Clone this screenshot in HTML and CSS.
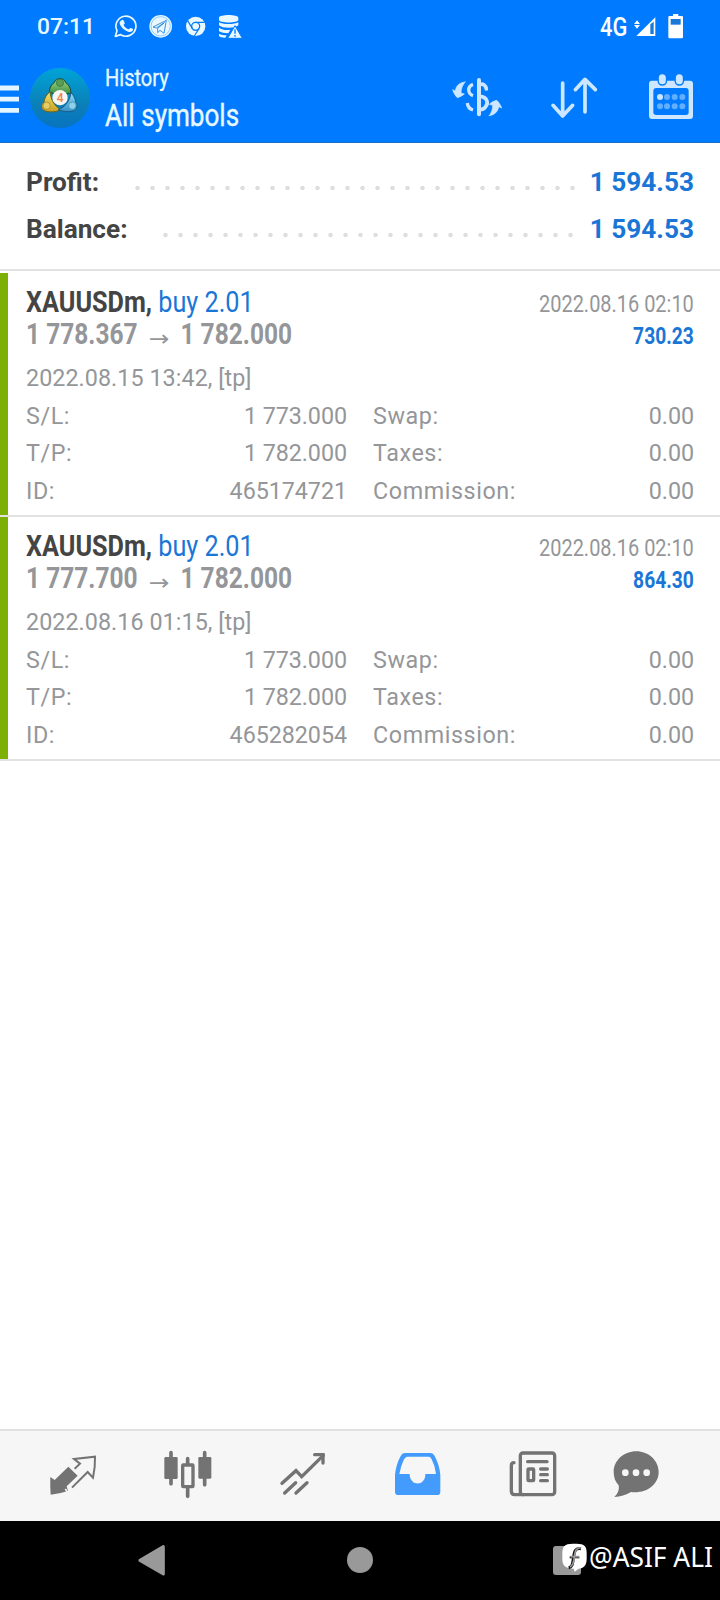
FILE: index.html
```html
<!DOCTYPE html>
<html lang="en">
<head>
<meta charset="utf-8">
<title>History</title>
<link rel="stylesheet" href="styles.css">
</head>
<body>
<div class="screen">
  <header class="top">
    <div class="status">
      <span class="clock">07:11</span>
      <svg class="notifications" width="135" height="34" viewBox="330 30 405 102">
        <path d="M346 109l5-17a30 30 0 1 1 11 12z" fill="none" stroke="#e9f8ff" stroke-width="5" stroke-linejoin="round"/>
        <path d="M363 62c5-5 8-2 11 7 1 3-4 5-3 7 3 6 8 10 14 12 3 1 4-6 8-4 8 4 8 4 4 9-6 6-13 3-21-2-9-6-18-17-17-23 0-3 1-4 4-6z" fill="#e9f8ff"/>
        <circle cx="482" cy="79" r="34" fill="#e9f8ff"/>
        <circle cx="482" cy="79" r="29" fill="none" stroke="#329bff" stroke-width="1.5"/>
        <path d="M459 81l40-20-7 39-12-9-7 7v-13l20-17-24 16z" fill="#e9f8ff" stroke="#167edd" stroke-width="2.5" stroke-linejoin="round"/>
        <circle cx="587" cy="79" r="29" fill="#e9f8ff"/>
        <circle cx="587" cy="79" r="12" fill="#e9f8ff" stroke="#087bee" stroke-width="4"/>
        <path d="M587 67h27M577 86l-14-24M597 86l-14 22" stroke="#087bee" stroke-width="3.5"/>
        <path d="M657 53c0-11 58-11 58 0v6c0 11-58 11-58 0zM657 67c10 7 48 7 58 0v9c-10 10-48 10-58 0zM657 83c8 7 25 8 34 6l-6 11c-12 0-22-2-28-6zM657 101c6 4 15 5 23 5l-4 7c-10 0-19-3-19-6z" fill="#e9f8ff"/>
        <path d="M705 77l22 38h-44z" fill="#e9f8ff" stroke="#007bff" stroke-width="3"/>
        <path d="M705 88v13M705 105v5" stroke="#007bff" stroke-width="4"/>
      </svg>
      <span class="network">4G</span>
      <svg class="signal" width="54" height="30" viewBox="606 33 162 90">
        <path d="M621 61l9 11h-18zM621 86l9-11h-18z" fill="#fff"/>
        <path d="M619 108l57-56v56z" fill="#fff"/>
        <path d="M661 73l10-8v37h-10z" fill="#1879d8"/>
        <path d="M729 42h16v6h11q3 0 3 4v59q0 4-4 4h-36q-4 0-4-4V52q0-4 4-4h10z" fill="#fff"/>
        <path d="M722 57h30v17h-30z" fill="#1879d8"/>
      </svg>
    </div>
    <div class="appbar">
      <svg class="menu" width="19" height="28" viewBox="0 0 19 28"><path d="M0 3h19M0 14.2h19M0 25.3h19" stroke="#e3f6ff" stroke-width="4.8"/></svg>
      <svg class="logo" width="60" height="60" viewBox="90 204 180 180">
        <defs>
          <linearGradient id="disc" x1="0" y1="0" x2="0" y2="1"><stop offset="0" stop-color="#00a4d8"/><stop offset=".6" stop-color="#0b80b8"/><stop offset="1" stop-color="#0873c0"/></linearGradient>
          <linearGradient id="green" x1="0" y1="0" x2="0" y2="1"><stop offset="0" stop-color="#a9d688"/><stop offset="1" stop-color="#3c9040"/></linearGradient>
          <linearGradient id="gold" x1="0" y1="0" x2="0" y2="1"><stop offset="0" stop-color="#f4e464"/><stop offset="1" stop-color="#c89f24"/></linearGradient>
          <linearGradient id="blue" x1="0" y1="0" x2="0" y2="1"><stop offset="0" stop-color="#95def8"/><stop offset="1" stop-color="#3490c8"/></linearGradient>
        </defs>
        <circle cx="180" cy="294" r="90" fill="url(#disc)"/>
        <path d="M148 275c1-14 7-23 15-27 2-16 31-16 34 0 9 5 15 15 16 30-11 6-52 7-65-3z" fill="url(#green)" stroke="#164d35" stroke-width="3"/>
        <path d="M150 275c-10 8-17 19-18 32-11 7-9 22 4 26 14 5 33 3 47-4-19-10-31-30-33-54z" fill="url(#gold)" stroke="#66621f" stroke-width="3"/>
        <path d="M213 278c8 8 13 17 14 28 8 8 4 23-7 27-15 4-33 2-45-4 20-8 34-25 38-51z" fill="url(#blue)" stroke="#155b89" stroke-width="3"/>
        <circle cx="180" cy="248" r="11" fill="#5c9f54" stroke="#2f6b3b" stroke-width="2"/>
        <circle cx="140" cy="317" r="11" fill="#e3cc66" stroke="#967f2c" stroke-width="2"/>
        <circle cx="217" cy="317" r="11" fill="#8bd2ea" stroke="#3a8bb2" stroke-width="2"/>
        <circle cx="180" cy="293" r="23" fill="#f8f6f2"/>
        <text class="logo-number" x="170" y="306">4</text>
      </svg>
      <div class="titles">
        <div class="subtitle">History</div>
        <div class="title">All symbols</div>
      </div>
      <svg class="actions" width="250" height="55" viewBox="60 210 750 165" fill="none" stroke="#cce7ff" stroke-linecap="round" stroke-linejoin="round">
        <path d="M105 246c-17 2-27 11-29 27l-8-4c3 10 8 18 14 24 8-2 15-6 21-11l-10-3c0-12 4-22 12-33z" fill="#cce7ff" stroke-width="2"/>
        <path d="M178 347c16-3 26-12 28-27l9 4c-4-10-9-18-15-23-9 2-16 6-22 12l10 3c0 12-3 21-10 31z" fill="#cce7ff" stroke-width="2"/>
        <path d="M147 240v103" stroke-width="12"/>
        <path d="M129 253c-17 6-17 28 0 34M112 309c1 11 7 18 17 21" stroke-width="10" stroke-linecap="butt"/>
        <path d="M150 253c10-2 17 3 19 14M150 289c22 2 26 20 17 31-4 7-10 9-17 9" stroke-width="11"/>
        <path d="M398 249v97M369 316l29 32 30-32M465 336v-97M436 269l29-31 31 31" stroke-width="11"/>
        <path fill-rule="evenodd" d="M666 242h114q9 0 9 9v97q0 9-9 9H666q-9 0-9-9v-97q0-9 9-9zM679 264q-9 0-9 9v64q0 8 9 8h89q8 0 8-8v-64q0-9-8-9z" fill="#cce7ff" stroke="none"/>
        <path d="M697 232v11M748 232v11" stroke="#007bff" stroke-width="29"/>
        <path d="M697 233v9M748 233v9" stroke-width="21"/>
        <g fill="#62aeff" stroke="none"><circle cx="690" cy="291" r="9" fill="#cce7ff"/><circle cx="711" cy="291" r="9"/><circle cx="734" cy="291" r="9"/><circle cx="757" cy="291" r="9"/><circle cx="690" cy="319" r="9"/><circle cx="711" cy="319" r="9"/><circle cx="734" cy="319" r="9"/><circle cx="757" cy="319" r="9"/></g>
      </svg>
    </div>
  </header>

  <section class="summary">
    <div class="total"><span class="total-label">Profit:</span><span class="leader"></span><span class="total-value">1 594.53</span></div>
    <div class="total total-balance"><span class="total-label">Balance:</span><span class="leader"></span><span class="total-value">1 594.53</span></div>
  </section>

  <main class="deals">
    <article class="deal">
      <div class="deal-head">
        <div class="deal-left">
          <div class="symbol"><b>XAUUSDm,</b> <span class="side">buy 2.01</span></div>
          <div class="prices">1 778.367 <span class="arrow">→</span> 1 782.000</div>
        </div>
        <div class="deal-right"><div class="closed">2022.08.16 02:10</div><div class="profit">730.23</div></div>
      </div>
      <div class="comment">2022.08.15 13:42, [tp]</div>
      <dl class="details">
        <div><dt>S/L:</dt><dd>1 773.000</dd></div><div><dt>Swap:</dt><dd>0.00</dd></div>
        <div><dt>T/P:</dt><dd>1 782.000</dd></div><div><dt>Taxes:</dt><dd>0.00</dd></div>
        <div><dt>ID:</dt><dd>465174721</dd></div><div><dt>Commission:</dt><dd>0.00</dd></div>
      </dl>
    </article>
    <article class="deal">
      <div class="deal-head">
        <div class="deal-left">
          <div class="symbol"><b>XAUUSDm,</b> <span class="side">buy 2.01</span></div>
          <div class="prices">1 777.700 <span class="arrow">→</span> 1 782.000</div>
        </div>
        <div class="deal-right"><div class="closed">2022.08.16 02:10</div><div class="profit">864.30</div></div>
      </div>
      <div class="comment">2022.08.16 01:15, [tp]</div>
      <dl class="details">
        <div><dt>S/L:</dt><dd>1 773.000</dd></div><div><dt>Swap:</dt><dd>0.00</dd></div>
        <div><dt>T/P:</dt><dd>1 782.000</dd></div><div><dt>Taxes:</dt><dd>0.00</dd></div>
        <div><dt>ID:</dt><dd>465282054</dd></div><div><dt>Commission:</dt><dd>0.00</dd></div>
      </dl>
    </article>
  </main>

  <nav class="tabs">
    <svg width="60" height="60" viewBox="128 75 180 180">
      <path d="M204 140l28 27-33 32 4 14q-27 9-52 11-2-26-1-53l13 9z" fill="#737373"/>
      <path d="M223 146l16-15-18-14 63-7q1 32-6 63l-16-17-47 47" fill="none" stroke="#737373" stroke-width="6"/>
      <path d="M195 207l6 9" stroke="#f6f6f6" stroke-width="5"/>
    </svg>
    <svg width="60" height="60" viewBox="473 75 180 180">
      <path d="M512 98v93M613 98v96M562 116v113" stroke="#737373" stroke-width="11" stroke-linecap="round"/>
      <rect x="492" y="111" width="40" height="66" rx="4" fill="#737373"/><rect x="594" y="111" width="39" height="65" rx="4" fill="#737373"/>
      <rect x="547" y="135" width="31" height="65" rx="2" fill="#f6f6f6" stroke="#737373" stroke-width="10"/>
    </svg>
    <svg width="60" height="60" viewBox="818 75 180 180" fill="none" stroke="#737373" stroke-width="10" stroke-linecap="round">
      <path d="M845 190l42-38 17 18 65-64M853 219l33-31M887 219l33-31"/><path d="M943 104h25v25" stroke-linejoin="miter"/>
    </svg>
    <svg width="60" height="60" viewBox="84 75 180 180">
      <path d="M134 99h78q8 0 12 9 15 29 17 57v50q0 10-10 10H115q-10 0-10-10v-50q2-29 17-57 4-9 12-9z" fill="#439bfd"/>
      <path d="M138 110h69q5 0 8 8 11 21 13 44h-32c1 38-47 38-47 0h-31q4-23 14-44 5-8 9-8h10z" fill="#f6f6f6"/>
    </svg>
    <svg width="60" height="60" viewBox="430 75 180 180" fill="none" stroke="#737373" stroke-linecap="round">
      <rect x="482" y="99" width="103" height="125" rx="8" stroke-width="10"/>
      <path d="M463 128q-8 0-8 9v77q0 10 10 10h25" stroke-width="10"/><path d="M504 125h58M543 147h20M543 164h20M543 182h20" stroke-width="10"/>
      <rect x="505" y="147" width="17" height="35" rx="2" stroke-width="10"/>
    </svg>
    <svg class="tab-chat" width="60" height="60" viewBox="738 75 180 180">
      <path d="M829 94c37 0 67 28 67 62 0 38-38 66-83 60-15 9-32 14-50 15 12-11 15-22 13-35-10-10-15-24-15-40 0-34 30-62 68-62z" fill="#737373"/>
      <g fill="#f6f6f6"><circle cx="796" cy="158" r="10"/><circle cx="828" cy="158" r="10"/><circle cx="860" cy="158" r="10"/></g>
    </svg>
  </nav>

  <footer class="system">
    <svg width="27" height="31" viewBox="415 375 81 93"><path d="M491 380v82l-70-41z" fill="#999" stroke="#999" stroke-width="9" stroke-linejoin="round"/></svg>
    <span class="home"></span>
    <span class="recent"></span>
    <div class="watermark">
      <svg width="25" height="29" viewBox="0 0 75 87"><path d="M32 2h12c24 0 30 8 30 28v18c0 20-10 28-24 29L38 86l-3-9C10 77 1 68 1 48V32C1 10 8 2 32 2z" fill="#fff"/><path d="M57 17c-18-3-20 8-23 30-2 17-4 25-14 27" fill="none" stroke="#111" stroke-width="9"/><path d="M23 43h29" stroke="#222" stroke-width="6"/><path d="M57 15c-15-2-18 9-20 28-2 16-5 25-13 29M26 41h25" fill="none" stroke="#999" stroke-width="5"/></svg>
      <span>@ASIF ALI</span>
    </div>
  </footer>
</div>
</body>
</html>
```
FILE: styles.css
```css
* { box-sizing: border-box; }
body { margin: 0; background: #fff; font-family: Roboto, "Liberation Sans", sans-serif; }
svg { display: block; flex: none; }
.screen { width: 720px; height: 1600px; display: flex; flex-direction: column; overflow: hidden; }

.top { height: 143px; background: #007bff; border-bottom: 1px solid #1672c8; color: #e8f8ff; }
.status { height: 54px; display: flex; align-items: flex-start; padding: 10px 34px 0 37px; }
.clock { width: 73px; font-size: 22.8px; line-height: 34px; font-weight: 500; white-space: nowrap; }
.network { margin-left: auto; width: 32px; font-size: 26px; line-height: 34px; font-weight: 500; color: #fff; transform: scaleX(.84); transform-origin: left; }
.signal { margin: 1px 0 0; }
.appbar { height: 88px; display: flex; align-items: flex-start; }
.menu { margin-top: 31px; }
.logo { margin: 14px 0 0 11px; }
.logo-number { font: 500 36px Roboto, sans-serif; fill: #ef8050; }
.titles { margin: 9px 0 0 15px; width: 200px; white-space: nowrap; }
.subtitle, .title { transform: scaleX(.86); transform-origin: left; }
.subtitle { font-size: 23.3px; line-height: 30px; -webkit-text-stroke: .3px; }
.title { font-size: 32px; line-height: 44px; transform: scaleX(.815); -webkit-text-stroke: .4px; }
.actions { margin: 16px 0 0 145px; }

.summary { height: 128px; padding: 16px 26px 0; border-bottom: 2px solid #e2e2e2; }
.total { height: 47px; display: flex; font-size: 26.2px; line-height: 47px; font-weight: 700; white-space: nowrap; }
.total-label { width: 104px; color: #444; }
.leader { width: 450px; height: 6px; margin-top: 26px; background: radial-gradient(circle at center, #dedede 1.8px, transparent 2.6px) 0 0 / 15px 6px; }
.total-balance .total-label { width: 132px; }
.total-balance .leader { width: 420px; }
.total-value { margin-left: auto; color: #1a76d6; }

.deals { flex: 1; padding-top: 2px; }
.deal { height: 244px; padding: 13px 26px 0 18px; border-left: 8px solid #7db004; position: relative; background: #fff; color: #949699; font-size: 23.3px; }
.deal::after { content: ""; position: absolute; left: -8px; right: 0; bottom: 0; height: 2px; background: #e2e2e2; }
.deal-head { display: flex; justify-content: space-between; height: 64px; white-space: nowrap; }
.symbol, .prices { font-size: 28.8px; line-height: 32px; transform: scaleX(.876); transform-origin: left; }
.symbol b { color: #444; }
.side { color: #1a76d6; }
.prices { font-weight: 700; transform: scaleX(.851); }
.arrow { display: inline-block; width: 36px; text-align: center; font-family: "DejaVu Sans", sans-serif; font-weight: 400; font-size: 29px; line-height: 30px; transform: translateY(4px) scaleY(.75); }
.deal-right { text-align: right; }
.closed, .profit { line-height: 32px; transform: scaleX(.856); transform-origin: right; padding-top: 2px; height: 32px; }
.profit { color: #1a76d6; font-weight: 700; transform: scaleX(.825); }
.comment { margin-top: 9px; height: 38px; line-height: 38px; letter-spacing: .06px; }
.details { margin: 0; display: grid; grid-template-columns: 1fr 1fr; column-gap: 26px; grid-template-rows: 37px 38px 37px; line-height: 38px; }
.details div { display: flex; justify-content: space-between; }
.details dt { letter-spacing: .6px; }
.details dd { margin: 0; letter-spacing: -.05px; }

.tabs { height: 92px; border-top: 2px solid #e1e1e1; background: #f6f6f6; display: flex; gap: 55px; padding: 14px 0 0 42.5px; }
.tab-chat { margin-left: -11.5px; }

.system { height: 79px; background: #000; display: flex; align-items: flex-start; position: relative; padding: 24px 0 0 138px; }
.home { width: 26px; height: 26px; margin: 2px 0 0 182px; border-radius: 50%; background: #999; }
.recent { width: 28px; height: 29px; margin: 1px 0 0 180px; border-radius: 3px; background: #999; }
.watermark { position: absolute; left: 562px; top: 22px; display: flex; color: #fff; font: 28px/36px "Noto Sans", sans-serif; white-space: nowrap; }
.watermark span { margin: -5px 0 0 2px; transform: scaleX(.94); transform-origin: left; }
```
